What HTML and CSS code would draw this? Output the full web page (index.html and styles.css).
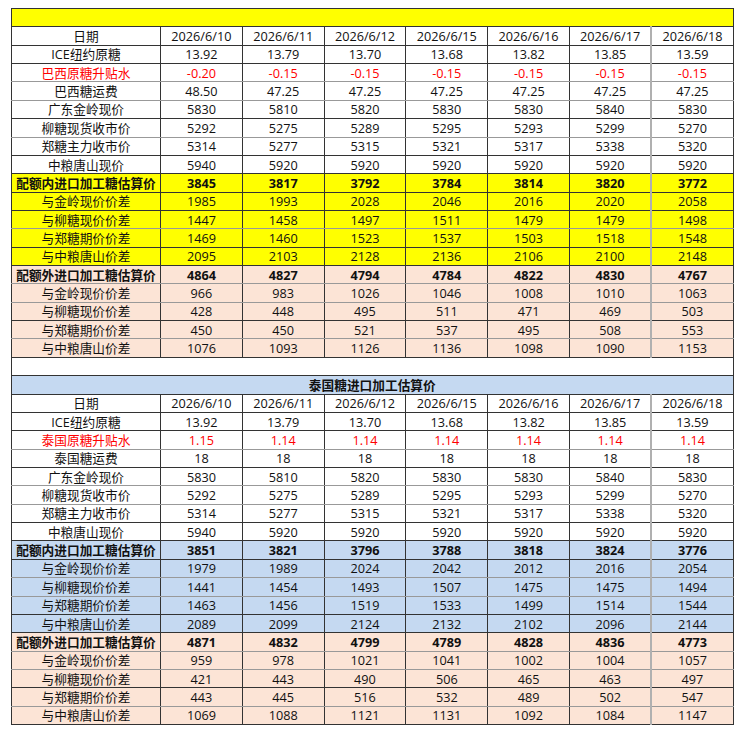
FILE: index.html
```html
<!DOCTYPE html>
<html lang="zh-CN">
<head>
<meta charset="utf-8">
<title>进口加工糖估算价</title>
<link rel="stylesheet" href="styles.css">
</head>
<body>
<table class="sheet">
<colgroup>
<col class="c-label"><col class="c-day"><col class="c-day"><col class="c-day"><col class="c-day"><col class="c-day"><col class="c-day"><col class="c-day">
</colgroup>
<tbody>
<tr class="title yellow"><td colspan="8"></td></tr>
<tr class="dates"><td>日期</td><td>2026/6/10</td><td>2026/6/11</td><td>2026/6/12</td><td>2026/6/15</td><td>2026/6/16</td><td>2026/6/17</td><td>2026/6/18</td></tr>
<tr><td>ICE纽约原糖</td><td>13.92</td><td>13.79</td><td>13.70</td><td>13.68</td><td>13.82</td><td>13.85</td><td>13.59</td></tr>
<tr class="red lt"><td>巴西原糖升贴水</td><td>-0.20</td><td>-0.15</td><td>-0.15</td><td>-0.15</td><td>-0.15</td><td>-0.15</td><td>-0.15</td></tr>
<tr class="lt"><td>巴西糖运费</td><td>48.50</td><td>47.25</td><td>47.25</td><td>47.25</td><td>47.25</td><td>47.25</td><td>47.25</td></tr>
<tr><td>广东金岭现价</td><td>5830</td><td>5810</td><td>5820</td><td>5830</td><td>5830</td><td>5840</td><td>5830</td></tr>
<tr class="lt"><td>柳糖现货收市价</td><td>5292</td><td>5275</td><td>5289</td><td>5295</td><td>5293</td><td>5299</td><td>5270</td></tr>
<tr><td>郑糖主力收市价</td><td>5314</td><td>5277</td><td>5315</td><td>5321</td><td>5317</td><td>5338</td><td>5320</td></tr>
<tr><td>中粮唐山现价</td><td>5940</td><td>5920</td><td>5920</td><td>5920</td><td>5920</td><td>5920</td><td>5920</td></tr>
<tr class="yellow head"><td>配额内进口加工糖估算价</td><td>3845</td><td>3817</td><td>3792</td><td>3784</td><td>3814</td><td>3820</td><td>3772</td></tr>
<tr class="yellow"><td>与金岭现价价差</td><td>1985</td><td>1993</td><td>2028</td><td>2046</td><td>2016</td><td>2020</td><td>2058</td></tr>
<tr class="yellow lt"><td>与柳糖现价价差</td><td>1447</td><td>1458</td><td>1497</td><td>1511</td><td>1479</td><td>1479</td><td>1498</td></tr>
<tr class="yellow"><td>与郑糖期价价差</td><td>1469</td><td>1460</td><td>1523</td><td>1537</td><td>1503</td><td>1518</td><td>1548</td></tr>
<tr class="yellow"><td>与中粮唐山价差</td><td>2095</td><td>2103</td><td>2128</td><td>2136</td><td>2106</td><td>2100</td><td>2148</td></tr>
<tr class="peach head lt"><td>配额外进口加工糖估算价</td><td>4864</td><td>4827</td><td>4794</td><td>4784</td><td>4822</td><td>4830</td><td>4767</td></tr>
<tr class="peach lt"><td>与金岭现价价差</td><td>966</td><td>983</td><td>1026</td><td>1046</td><td>1008</td><td>1010</td><td>1063</td></tr>
<tr class="peach"><td>与柳糖现价价差</td><td>428</td><td>448</td><td>495</td><td>511</td><td>471</td><td>469</td><td>503</td></tr>
<tr class="peach lt"><td>与郑糖期价价差</td><td>450</td><td>450</td><td>521</td><td>537</td><td>495</td><td>508</td><td>553</td></tr>
<tr class="peach"><td>与中粮唐山价差</td><td>1076</td><td>1093</td><td>1126</td><td>1136</td><td>1098</td><td>1090</td><td>1153</td></tr>
<tr class="blank"><td colspan="8"></td></tr>
<tr class="title blue"><td colspan="8">泰国糖进口加工估算价</td></tr>
<tr class="dates"><td>日期</td><td>2026/6/10</td><td>2026/6/11</td><td>2026/6/12</td><td>2026/6/15</td><td>2026/6/16</td><td>2026/6/17</td><td>2026/6/18</td></tr>
<tr><td>ICE纽约原糖</td><td>13.92</td><td>13.79</td><td>13.70</td><td>13.68</td><td>13.82</td><td>13.85</td><td>13.59</td></tr>
<tr class="red lt"><td>泰国原糖升贴水</td><td>1.15</td><td>1.14</td><td>1.14</td><td>1.14</td><td>1.14</td><td>1.14</td><td>1.14</td></tr>
<tr><td>泰国糖运费</td><td>18</td><td>18</td><td>18</td><td>18</td><td>18</td><td>18</td><td>18</td></tr>
<tr class="lt"><td>广东金岭现价</td><td>5830</td><td>5810</td><td>5820</td><td>5830</td><td>5830</td><td>5840</td><td>5830</td></tr>
<tr class="lt"><td>柳糖现货收市价</td><td>5292</td><td>5275</td><td>5289</td><td>5295</td><td>5293</td><td>5299</td><td>5270</td></tr>
<tr><td>郑糖主力收市价</td><td>5314</td><td>5277</td><td>5315</td><td>5321</td><td>5317</td><td>5338</td><td>5320</td></tr>
<tr><td>中粮唐山现价</td><td>5940</td><td>5920</td><td>5920</td><td>5920</td><td>5920</td><td>5920</td><td>5920</td></tr>
<tr class="blue head"><td>配额内进口加工糖估算价</td><td>3851</td><td>3821</td><td>3796</td><td>3788</td><td>3818</td><td>3824</td><td>3776</td></tr>
<tr class="blue lt"><td>与金岭现价价差</td><td>1979</td><td>1989</td><td>2024</td><td>2042</td><td>2012</td><td>2016</td><td>2054</td></tr>
<tr class="blue lt"><td>与柳糖现价价差</td><td>1441</td><td>1454</td><td>1493</td><td>1507</td><td>1475</td><td>1475</td><td>1494</td></tr>
<tr class="blue"><td>与郑糖期价价差</td><td>1463</td><td>1456</td><td>1519</td><td>1533</td><td>1499</td><td>1514</td><td>1544</td></tr>
<tr class="blue"><td>与中粮唐山价差</td><td>2089</td><td>2099</td><td>2124</td><td>2132</td><td>2102</td><td>2096</td><td>2144</td></tr>
<tr class="peach head lt"><td>配额外进口加工糖估算价</td><td>4871</td><td>4832</td><td>4799</td><td>4789</td><td>4828</td><td>4836</td><td>4773</td></tr>
<tr class="peach lt"><td>与金岭现价价差</td><td>959</td><td>978</td><td>1021</td><td>1041</td><td>1002</td><td>1004</td><td>1057</td></tr>
<tr class="peach"><td>与柳糖现价价差</td><td>421</td><td>443</td><td>490</td><td>506</td><td>465</td><td>463</td><td>497</td></tr>
<tr class="peach lt"><td>与郑糖期价价差</td><td>443</td><td>445</td><td>516</td><td>532</td><td>489</td><td>502</td><td>547</td></tr>
<tr class="peach"><td>与中粮唐山价差</td><td>1069</td><td>1088</td><td>1121</td><td>1131</td><td>1092</td><td>1084</td><td>1147</td></tr>
</tbody>
</table>
</body>
</html>
```
FILE: styles.css
```css
html, body {
  background: #ffffff;
}
body {
  margin: 8px 0 0 11px;
}
.sheet {
  border-collapse: collapse;
  table-layout: fixed;
  width: 722px;
  font-family: "Open Sans", "Noto Sans CJK SC", sans-serif;
  font-size: 12.7px;
  color: #111111;
  border: 1px solid #333333;
}
.c-label {
  width: 149px;
}
.c-day {
  width: 81.8px;
}
.sheet tr {
  height: 18.37px;
}
.sheet td {
  padding: 0;
  text-align: center;
  vertical-align: middle;
  line-height: 16px;
  white-space: nowrap;
  overflow: hidden;
  border: 1px solid #333333;
}
.sheet td:nth-child(8) {
  border-left: 2px solid #b0b0b0;
}
.sheet tr.lt td {
  border-bottom-color: #999999;
}
.yellow td {
  background: #ffff00;
}
.peach td {
  background: #fce4d6;
}
.blue td {
  background: #c5d9f1;
}
.red td {
  color: #ff0000;
}
.head td {
  font-weight: bold;
}
.title td {
  font-weight: bold;
  border-left: 1px solid #333333;
}
.blank td {
  background: #ffffff;
  border-top: 1px solid #333333;
  border-bottom: 1px solid #333333;
}
```
